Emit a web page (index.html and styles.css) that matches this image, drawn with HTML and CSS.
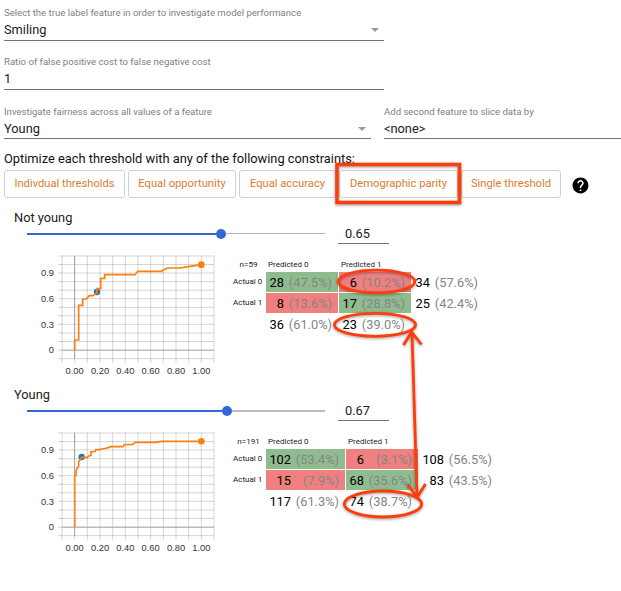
FILE: index.html
```
<!DOCTYPE html>
<html lang="en">
<head>
<meta charset="utf-8">
<title>Performance and fairness</title>
<link rel="stylesheet" href="styles.css">
</head>
<body>
<main class="panel">
  <div class="field wide"><label>Select the true label feature in order to investigate model performance</label><div class="value">Smiling<i class="caret"></i></div></div>
  <div class="field wide"><label>Ratio of false positive cost to false negative cost</label><div class="value">1</div></div>
  <div class="fields">
    <div class="field"><label>Investigate fairness across all values of a feature</label><div class="value">Young<i class="caret"></i></div></div>
    <div class="field"><label>Add second feature to slice data by</label><div class="value">&lt;none&gt;</div></div>
  </div>
  <p class="prompt">Optimize each threshold with any of the following constraints:</p>
  <div class="buttons">
    <button class="b1">Indivdual thresholds</button>
    <button class="b2">Equal opportunity</button>
    <button class="b3">Equal accuracy</button>
    <button class="b4">Demographic parity</button>
    <button class="b5">Single threshold</button>
    <svg class="help" viewBox="0 0 24 24"><path d="M12 2C6.48 2 2 6.48 2 12s4.480 10 10 10 10-4.480 10-10S17.520 2 12 2zm1 17h-2v-2h2v2zm2.070-7.750l-.9.920C13.450 12.900 13 13.500 13 15h-2v-.5c0-1.100.450-2.100 1.170-2.830l1.240-1.260c.370-.360.590-.860.590-1.410 0-1.100-.9-2-2-2s-2 .9-2 2H8c0-2.210 1.790-4 4-4s4 1.790 4 4c0 .880-.360 1.680-.930 2.250z"/></svg>
  </div>

  <section class="slice first">
    <h2>Not young</h2>
    <div class="threshold"><div class="slider"><div class="fill"></div><div class="knob"></div><div class="rest"></div></div><div class="number">0.65</div></div>
    <div class="details">
      <svg class="chart" viewBox="0 0 600 390">
        <path class="grid" d="M96 17V339M172 17V339M210 17V339M248 17V339M286 17V339M324 17V339M362 17V339M400 17V339M438 17V339M476 17V339M514 17V339M552 17V339M84 326H552M84 274.5H552M84 249H552M84 223H552M84 197.500H552M84 172H552M84 146H552M84 120.500H552M84 95H552M84 69H552M84 43.500H552M84 18H552"/>
        <path class="axis" d="M134 17V327M96 300.500H552"/><path class="grid" d="M134 327V339M84 300.500H96"/>
        <g class="ylab"><text x="72" y="78">0.9</text><text x="72" y="156">0.6</text><text x="72" y="233">0.3</text><text x="72" y="309">0</text></g>
        <g class="xlab"><text x="134" y="372">0.00</text><text x="210" y="372">0.20</text><text x="286" y="372">0.40</text><text x="362" y="372">0.60</text><text x="438" y="372">0.80</text><text x="514" y="372">1.00</text></g>
        <circle class="current" cx="201" cy="126" r="9.500"/>
        <path class="roc" d="M134 300V270H146V166H158V147H169L178 137H190L201 128V116H212V85H224V74H315L323 64H393L412 54H450L480 49L514 44"/>
        <circle class="end" cx="514" cy="44" r="10"/>
      </svg>
      <div class="matrix">
        <span class="head n">n=59</span><span class="head">Predicted 0</span><span class="head">Predicted 1</span><span></span>
        <span class="row">Actual 0</span><div class="cell good"><b>28</b><i>(47.5%)</i></div><div class="cell bad"><b>6</b><i>(10.2%)</i></div><div class="cell"><b>34</b><i>(57.6%)</i></div>
        <span class="row">Actual 1</span><div class="cell bad"><b>8</b><i>(13.6%)</i></div><div class="cell good"><b>17</b><i>(28.8%)</i></div><div class="cell"><b>25</b><i>(42.4%)</i></div>
        <span></span><div class="cell"><b>36</b><i>(61.0%)</i></div><div class="cell"><b>23</b><i>(39.0%)</i></div>
      </div>
    </div>
  </section>

  <section class="slice second">
    <h2>Young</h2>
    <div class="threshold"><div class="slider"><div class="fill"></div><div class="knob"></div><div class="rest"></div></div><div class="number">0.67</div></div>
    <div class="details">
      <svg class="chart" viewBox="0 0 600 390">
        <path class="grid" d="M96 17V339M172 17V339M210 17V339M248 17V339M286 17V339M324 17V339M362 17V339M400 17V339M438 17V339M476 17V339M514 17V339M552 17V339M84 326H552M84 274.5H552M84 249H552M84 223H552M84 197.500H552M84 172H552M84 146H552M84 120.500H552M84 95H552M84 69H552M84 43.500H552M84 18H552"/>
        <path class="axis" d="M134 17V327M96 300.500H552"/><path class="grid" d="M134 327V339M84 300.500H96"/>
        <g class="ylab"><text x="72" y="78">0.9</text><text x="72" y="156">0.6</text><text x="72" y="233">0.3</text><text x="72" y="309">0</text></g>
        <g class="xlab"><text x="134" y="372">0.00</text><text x="210" y="372">0.20</text><text x="286" y="372">0.40</text><text x="362" y="372">0.60</text><text x="438" y="372">0.80</text><text x="514" y="372">1.00</text></g>
        <circle class="current" cx="155" cy="90" r="9.500"/>
        <path class="roc" d="M134 300V149L138 145V132L142 123L146 119V104L150 99L156 91H172L175 88L183 85V75L196 73L198 68H210L214 66L228 64L242 59H279L283 53L308 52L315 46H375L395 43H514"/>
        <circle class="end" cx="514" cy="43" r="10"/>
      </svg>
      <div class="matrix">
        <span class="head n">n=191</span><span class="head">Predicted 0</span><span class="head">Predicted 1</span><span></span>
        <span class="row">Actual 0</span><div class="cell w good"><b>102</b><i>(53.4%)</i></div><div class="cell bad"><b>6</b><i>(3.1%)</i></div><div class="cell w"><b>108</b><i>(56.5%)</i></div>
        <span class="row">Actual 1</span><div class="cell w bad"><b>15</b><i>(7.9%)</i></div><div class="cell good"><b>68</b><i>(35.6%)</i></div><div class="cell w"><b>83</b><i>(43.5%)</i></div>
        <span></span><div class="cell w"><b>117</b><i>(61.3%)</i></div><div class="cell"><b>74</b><i>(38.7%)</i></div>
      </div>
    </div>
  </section>

  <svg class="marks" viewBox="0 0 621 591">
    <rect x="337" y="164.500" width="122.500" height="38" stroke-width="3.500"/>
    <ellipse cx="376.600" cy="281.500" rx="38.300" ry="11.300"/>
    <ellipse cx="375" cy="324.800" rx="40.600" ry="11.500"/>
    <ellipse cx="383" cy="504" rx="38.700" ry="13"/>
    <path d="M412 333L417 496"/>
    <path d="M403.500 345L411.500 332L421.500 344.500M407.500 484.500L417.300 497L425.500 484"/>
  </svg>
</main>
</body>
</html>
```
FILE: styles.css
```
* { box-sizing: border-box; }
body { margin: 0; background: #fff; color: #212121; font-family: Roboto, "Liberation Sans", sans-serif; }
.panel { position: relative; width: 621px; height: 591px; padding: 7px 0 0 4px; overflow: hidden; }
.field { height: 49px; }
.wide { width: 380px; }
.field label { display: block; height: 13px; font-size: 9.58px; line-height: 11px; color: #808080; white-space: nowrap; }
.value { display: flex; justify-content: space-between; height: 21px; border-bottom: 1px solid #737373; font-size: 12.8px; line-height: 20px; }
.caret { width: 8px; height: 4px; margin: 8px 5px 0 0; background: #999; clip-path: polygon(0 0, 100% 0, 50% 100%); }
.fields { display: grid; grid-template-columns: 367px 237px; column-gap: 13px; padding-top: 1px; height: 49px; }
.fields .value { height: 20px; line-height: 19px; }
.prompt { margin: -3px 0 0; height: 18px; font-size: 12.83px; line-height: 16px; color: #111; white-space: nowrap; }
.buttons { display: flex; gap: 3px; margin-top: 1px; height: 28px; }
.buttons button { height: 28px; padding: 0 0 2px; border: 1px solid #d0d0d0; border-radius: 3px; background: #fff; color: #e07b2c; font: 11.2px Roboto, sans-serif; white-space: nowrap; }
.b1 { width: 121px; } .b2 { width: 108px; } .b3 { width: 97px; } .b4 { width: 119px; } .b5 { width: 100px; }
.help { width: 19px; height: 19px; margin: 6px 0 0 7px; }
.slice { height: 177px; padding-left: 10px; }
.first { margin-top: 10px; }
.slice h2 { margin: 0; height: 18px; font-size: 12.8px; line-height: 20px; font-weight: 400; }
.threshold { display: flex; height: 18px; padding-left: 13px; }
.slider { display: flex; align-items: center; width: 298px; height: 15px; }
.fill { width: 189px; height: 2px; background: #3367d6; }
.second .fill { width: 195px; }
.knob { width: 10px; height: 10px; border-radius: 50%; background: #3367d6; }
.rest { flex: 1; height: 1px; background: #b5b5b5; }
.second .rest { height: 2px; background: #bdbdbd; }
.number { width: 51px; height: 18px; margin-left: 13px; padding-left: 7px; border-bottom: 1px solid #737373; font-size: 12.8px; line-height: 15px; }
.details { display: flex; padding-left: 16px; margin-top: 6px; }
.chart { width: 200px; height: 130px; flex: none; }
.grid { fill: none; stroke: #000; stroke-opacity: .16; stroke-width: 3; }
.axis { fill: none; stroke: #999; stroke-width: 3; }
.chart text { font: 28px "Liberation Sans", sans-serif; fill: #32313f; }
.ylab { text-anchor: end; }
.xlab { text-anchor: middle; }
.roc { fill: none; stroke: #ff7f0e; stroke-width: 5; }
.current { fill: #1f77b4; }
.end { fill: #ff7f0e; }
.matrix { display: grid; grid-template-columns: 33px auto auto auto; grid-template-rows: 13px 20px 20px 20px; gap: 1px; margin: 8px 0 0 2px; height: 77px; }
.head { font-size: 8px; line-height: 13px; padding-left: 2px; white-space: nowrap; }
.n { text-align: center; padding-right: 2px; }
.row { padding-left: 1px; font-size: 8px; line-height: 20px; white-space: nowrap; }
.cell { display: flex; width: 72px; height: 20px; font-size: 12.8px; line-height: 21px; white-space: nowrap; }
.cell b { width: 18px; font-weight: 400; color: #000; text-align: right; flex: none; }
.cell i { width: 48px; font-style: normal; color: #858585; text-align: right; flex: none; }
.cell.w { width: 79px; }
.cell.w b { width: 25px; }
.good { background: #8fbc8f; }
.bad { background: #f08080; }
.marks { position: absolute; left: 0; top: 0; width: 621px; height: 591px; fill: none; stroke: #ff3d0a; stroke-width: 2.8; pointer-events: none; filter: drop-shadow(0 1px 1.5px rgba(0,0,0,.4)); }
```
